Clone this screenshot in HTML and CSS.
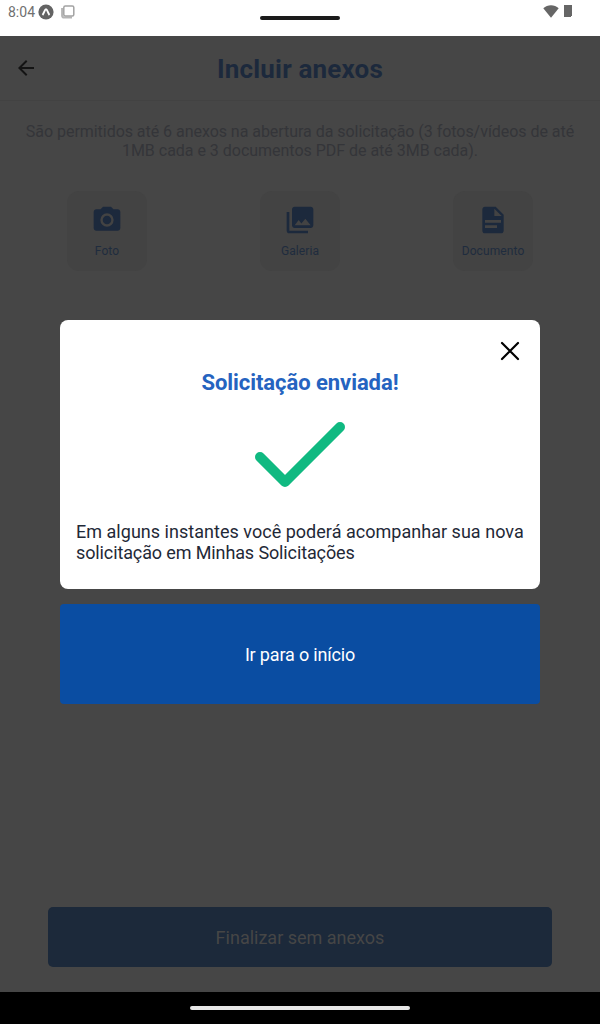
FILE: index.html
```html
<!DOCTYPE html>
<html lang="pt-BR">
<head>
<meta charset="utf-8">
<title>Incluir anexos</title>
<link rel="stylesheet" href="styles.css">
</head>
<body>
<div class="device">
  <div class="status">
    <span class="clock">8:04</span>
    <svg class="app-icon" width="16" height="16" viewBox="0 0 16 16"><circle cx="8" cy="8" r="7.6" fill="#636363"/><path d="M4.500 11C6 9.500 6.700 5.200 8 5.200S10 9.500 11.500 11" fill="none" stroke="#fff" stroke-width="1.900"/></svg>
    <svg class="copy-icon" width="14" height="14" viewBox="0 0 14 14"><path d="M1.200 3v7.500a2 2 0 0 0 2 2H11" fill="none" stroke="#b5b5b5" stroke-width="2.200"/><rect x="2.800" y="1" width="10" height="10" rx="1.500" fill="#fff" stroke="#a3a3a3" stroke-width="1.500"/></svg>
    <span class="notch"></span>
    <svg class="wifi" width="16" height="13" viewBox="0 0 16 13"><path d="M.3 3.300C4.500-.7 11.500-.7 15.700 3.300L8 12.800z" fill="#666"/></svg>
    <svg class="battery" width="8" height="12" viewBox="0 0 8 12"><path d="M0 0h8v11H7v1H0z" fill="#666"/></svg>
  </div>
  <div class="screen">
    <header class="header">
      <svg class="back" width="24" height="24" viewBox="0 0 24 24"><path d="M20 11H7.830l5.590-5.590L12 4l-8 8 8 8 1.410-1.410L7.830 13H20z" fill="#141414"/></svg>
      <h1 class="title">Incluir anexos</h1>
    </header>
    <p class="hint"><span class="hint-first">São permitidos até 6 anexos na abertura da solicitação (3 fotos/vídeos de até</span><br><span class="hint-second">1MB cada e 3 documentos PDF de até 3MB cada).</span></p>
    <div class="options">
      <div class="option">
        <svg width="32" height="32" viewBox="0 0 24 24"><path d="M9 2 7.170 4H4c-1.100 0-2 .9-2 2v12c0 1.100.9 2 2 2h16c1.100 0 2-.9 2-2V6c0-1.100-.9-2-2-2h-3.170L15 2zm3 15a5 5 0 1 1 0-10 5 5 0 0 1 0 10z"/><circle cx="12" cy="12" r="3.200"/></svg>
        <span class="option-label">Foto</span>
      </div>
      <div class="option">
        <svg width="32" height="32" viewBox="0 0 24 24"><path d="M22 16V4c0-1.100-.9-2-2-2H8c-1.100 0-2 .9-2 2v12c0 1.100.9 2 2 2h12c1.100 0 2-.9 2-2zm-11-4 2.030 2.710L16 11l4 5H8zM2 6v14c0 1.100.9 2 2 2h14v-2H4V6z"/></svg>
        <span class="option-label">Galeria</span>
      </div>
      <div class="option">
        <svg width="32" height="32" viewBox="0 0 24 24"><path fill-rule="evenodd" d="M14 2H6c-1.100 0-2 .9-2 2v16c0 1.100.9 2 2 2h12c1.100 0 2-.9 2-2V8zM6 12h12v2H6zM6 16h9v2H6zM13 3.500V9h5.500z"/></svg>
        <span class="option-label">Documento</span>
      </div>
    </div>
    <button class="finish">Finalizar sem anexos</button>
    <div class="overlay">
      <section class="dialog">
        <svg class="close" width="20" height="20" viewBox="0 0 20 20"><path d="M2 2l16 16M18 2 2 18" stroke="#000" stroke-width="2.200" stroke-linecap="round"/></svg>
        <h2 class="dialog-title">Solicitação enviada!</h2>
        <svg class="check" width="90" height="66" viewBox="0 0 90 66"><path d="M5 35 30 60 85 5" fill="none" stroke="#10b981" stroke-width="10" stroke-linecap="round" stroke-linejoin="round"/></svg>
        <p class="dialog-text"><span class="text-first">Em alguns instantes você poderá acompanhar sua nova</span><br><span class="text-second">solicitação em Minhas Solicitações</span></p>
      </section>
      <button class="home">Ir para o início</button>
    </div>
  </div>
  <div class="navbar"><span class="handle"></span></div>
</div>
</body>
</html>
```

FILE: styles.css
```css
* { box-sizing: border-box; }
body { margin: 0; font-family: Roboto, "Liberation Sans", sans-serif; }
h1, h2, p { margin: 0; }
svg { display: block; flex: none; }
button { border: 0; font: inherit; }
span { white-space: nowrap; }
.device { width: 600px; height: 1024px; display: flex; flex-direction: column; overflow: hidden; }
.status { height: 36px; display: flex; align-items: flex-start; background: #fff; padding: 4px 28px 0 8px; }
.clock { width: 30px; font-size: 14px; line-height: 17px; color: #707070; }
.copy-icon { margin: 1px 0 0 7px; }
.notch { width: 80px; height: 4px; margin: 12px 0 0 185px; border-radius: 2px; background: #1b1b1b; }
.wifi { margin: 1px 5px 0 auto; }
.battery { margin-top: 1px; }
.screen { position: relative; flex: 1; display: flex; flex-direction: column; background: #464646; }
.header { height: 65px; display: flex; align-items: center; padding: 0 14px; border-bottom: 1px solid #424242; }
.title { flex: 1; margin-right: 24px; padding-top: 2px; text-align: center; font-size: 26px; line-height: 32px; font-weight: 700; letter-spacing: .18px; color: #1c293c; }
.hint { margin-top: 21px; text-align: center; font-size: 16px; line-height: 19px; color: #343539; }
.hint-first { letter-spacing: -.04px; }
.hint-second { letter-spacing: -.02px; }
.options { display: flex; justify-content: space-between; padding: 0 67px; margin-top: 31px; }
.option { width: 80px; height: 80px; border-radius: 12px; background: #434343; display: flex; flex-direction: column; align-items: center; padding-top: 13px; gap: 7px; fill: #1c293c; color: #1f2c3e; }
.option-label { font-size: 12px; line-height: 16px; letter-spacing: .1px; }
.finish { height: 60px; margin: auto 48px 25px; border-radius: 5px; background: #1c293a; color: #464646; font-size: 18px; }
.overlay { position: absolute; inset: 0; padding: 284px 60px 0; display: flex; flex-direction: column; gap: 15px; }
.dialog { height: 269px; border-radius: 8px; background: #fff; padding: 21px 16px 0; display: flex; flex-direction: column; align-items: center; }
.close { align-self: flex-end; margin-right: 4px; }
.dialog-title { margin-top: 9px; font-size: 22px; line-height: 26px; font-weight: 700; letter-spacing: -.06px; color: #2563c0; }
.check { margin-top: 26px; }
.dialog-text { margin-top: 33px; width: 100%; font-size: 18px; line-height: 21px; color: #1f2937; }
.text-first { letter-spacing: .025px; }
.text-second { letter-spacing: -.12px; }
.home { height: 100px; border-radius: 4px; background: #0a4da2; color: #fff; font-size: 18px; letter-spacing: -.17px; }
.navbar { height: 32px; background: #000; display: flex; align-items: center; justify-content: center; }
.handle { width: 220px; height: 4px; border-radius: 2px; background: #e8e8e8; }
```
